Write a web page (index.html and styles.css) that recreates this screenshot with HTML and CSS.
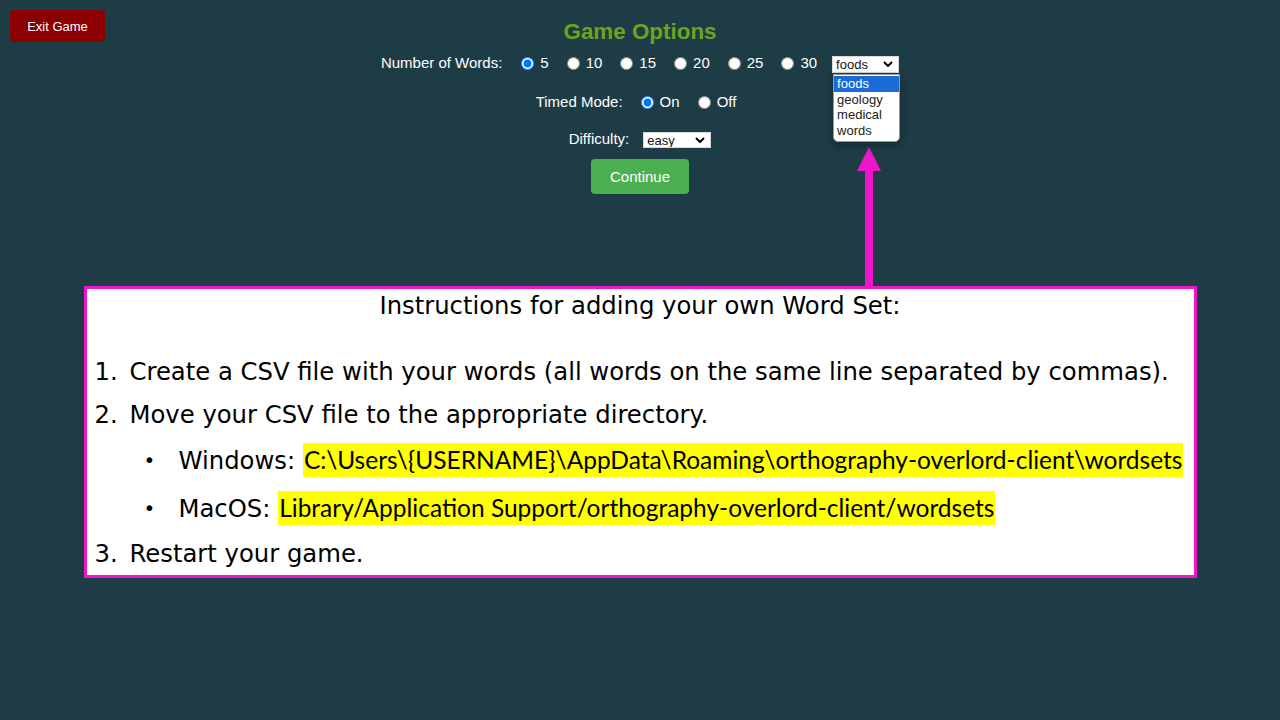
FILE: index.html
```html
<!DOCTYPE html>
<html lang="en">
<head>
<meta charset="utf-8">
<title>Game Options</title>
<link rel="stylesheet" href="styles.css">
</head>
<body>
<div class="page">
  <header class="topbar">
    <div class="topbar-left"><button class="btn-exit" type="button">Exit Game</button></div>
    <h1 class="title">Game Options</h1>
    <div></div>
  </header>

  <section class="options">
    <div class="row">
      <span class="row-label">Number of Words:</span>
      <label class="opt"><input type="radio" name="count" checked>5</label>
      <label class="opt"><input type="radio" name="count">10</label>
      <label class="opt"><input type="radio" name="count">15</label>
      <label class="opt"><input type="radio" name="count">20</label>
      <label class="opt"><input type="radio" name="count">25</label>
      <label class="opt opt-last"><input type="radio" name="count">30</label>
      <span class="select select-words">
        <select><option>foods</option><option>geology</option><option>medical</option><option>words</option></select>
        <svg class="chev" viewBox="0 0 10 6" width="10" height="6"><path d="M1 1 L5 5 L9 1" fill="none" stroke="#000" stroke-width="2"/></svg>
        <span class="popup">
          <span class="popup-item is-selected">foods</span>
          <span class="popup-item">geology</span>
          <span class="popup-item">medical</span>
          <span class="popup-item">words</span>
        </span>
      </span>
    </div>
    <div class="row row-timed">
      <span class="row-label">Timed Mode:</span>
      <label class="opt"><input type="radio" name="timed" checked>On</label>
      <label class="opt opt-end"><input type="radio" name="timed">Off</label>
    </div>
    <div class="row row-diff">
      <span class="row-label label-diff">Difficulty:</span>
      <span class="select select-diff">
        <select><option>easy</option><option>medium</option><option>hard</option></select>
        <svg class="chev" viewBox="0 0 10 6" width="10" height="6"><path d="M1 1 L5 5 L9 1" fill="none" stroke="#000" stroke-width="2"/></svg>
      </span>
    </div>
    <button class="btn-continue" type="button">Continue</button>
  </section>

  <section class="instructions">
    <p class="ins-title">Instructions for adding your own Word Set:</p>
    <ol class="steps">
      <li class="step"><span class="num">1.</span><span>Create a CSV file with your words (all words on the same line separated by commas).</span></li>
      <li class="step"><span class="num">2.</span><span>Move your CSV file to the appropriate directory.</span></li>
      <li class="sub"><span class="bullet">•</span><span>Windows: <mark class="path">C:\Users\{USERNAME}\AppData\Roaming\orthography-overlord-client\wordsets</mark></span></li>
      <li class="sub"><span class="bullet">•</span><span>MacOS: <mark class="path">Library/Application Support/orthography-overlord-client/wordsets</mark></span></li>
      <li class="step"><span class="num">3.</span><span>Restart your game.</span></li>
    </ol>
  </section>

  <svg class="arrow" width="28" height="142" viewBox="0 0 28 142">
    <polygon points="14,2 2,26 26,26" fill="#ef15c8"/>
    <rect x="10" y="25" width="8" height="117" fill="#ef15c8"/>
  </svg>
</div>
</body>
</html>
```

FILE: styles.css
```css
html, body {
  margin: 0;
  padding: 0;
  background: #1e3c45;
}

.page {
  position: relative;
  width: 1280px;
  height: 720px;
  overflow: hidden;
  font-family: "Liberation Sans", Arial, sans-serif;
  color: #ffffff;
}

.topbar {
  display: grid;
  grid-template-columns: 1fr auto 1fr;
  align-items: start;
  padding: 10px 10px 0;
}

.btn-exit {
  width: 95px;
  height: 32px;
  border: none;
  border-radius: 4px;
  background: #8b0000;
  color: #ffffff;
  font-family: "Liberation Sans", Arial, sans-serif;
  font-size: 13px;
  padding: 0;
  cursor: pointer;
}

.title {
  margin: 10px 0 0;
  font-size: 22.4px;
  line-height: 24px;
  font-weight: bold;
  color: #6ba51f;
  text-align: center;
}

.options {
  display: flex;
  flex-direction: column;
  align-items: center;
}

.row {
  display: flex;
  align-items: center;
  height: 18px;
  font-size: 15px;
  line-height: 18px;
  margin-top: 10px;
}

.row-timed { margin-top: 21px; }
.row-diff { margin-top: 19px; }

.row-label { margin-right: 19px; }
.row-timed .row-label { margin-right: 18px; }
.label-diff { margin-right: 14px; }

.opt {
  display: flex;
  align-items: center;
  margin-right: 18px;
}
.opt-last { margin-right: 15px; }
.opt-end { margin-right: 8px; }

.opt input {
  width: 13px;
  height: 13px;
  margin: 0 6px 0 0;
  accent-color: #0075ff;
}

.select {
  position: relative;
  display: inline-block;
}

.select select {
  appearance: none;
  -webkit-appearance: none;
  display: block;
  background: #ffffff;
  border: 1px solid #d8d8d8;
  border-radius: 0;
  color: #111;
  font-family: "Liberation Sans", Arial, sans-serif;
  font-size: 13px;
  line-height: 15px;
  padding: 0 0 0 3px;
  margin: 0;
  outline: none;
}

.select-words { margin-top: 3px; }
.select-words select { width: 67px; height: 17px; }
.select-diff { margin-top: 2px; }
.select-diff select { width: 68px; height: 16px; }

.chev {
  position: absolute;
  right: 6px;
  top: 5px;
  pointer-events: none;
}

.popup {
  position: absolute;
  left: 1px;
  top: 18px;
  width: 65px;
  display: flex;
  flex-direction: column;
  padding: 1px 0 3px;
  background: #ffffff;
  border: 1px solid #9a9a9a;
  border-radius: 0 0 5px 5px;
  box-shadow: 0 3px 8px rgba(0, 0, 0, 0.35);
  z-index: 2;
}

.popup-item {
  display: block;
  height: 15.5px;
  line-height: 15px;
  padding-left: 3px;
  font-size: 13px;
  color: #222;
}

.popup-item.is-selected {
  background: #1a6ad8;
  color: #ffffff;
}

.btn-continue {
  margin-top: 11px;
  width: 98px;
  height: 35px;
  border: none;
  border-radius: 4px;
  background: #4caf50;
  color: #ffffff;
  font-family: "Liberation Sans", Arial, sans-serif;
  font-size: 15px;
  padding: 0;
  cursor: pointer;
}

.instructions {
  box-sizing: border-box;
  width: 1113px;
  margin: 92px auto 0;
  border: 3px solid #ef15c8;
  background: #ffffff;
  color: #000000;
  font-family: "DejaVu Sans", Verdana, sans-serif;
  font-size: 24.3px;
  padding: 0 0 0 8px;
}

.ins-title {
  margin: 0;
  height: 34px;
  line-height: 34px;
  text-align: center;
  padding-right: 8px;
}

.steps {
  list-style: none;
  margin: 27px 0 0;
  padding: 0;
}

.step {
  display: flex;
  height: 43px;
  line-height: 43px;
}

.num { width: 35px; flex: none; }

.sub {
  display: flex;
  align-items: center;
  height: 48px;
  line-height: 48px;
  padding-left: 49px;
}

.bullet {
  width: 35px;
  flex: none;
  font-size: 20px;
  line-height: 48px;
}

.path {
  background: #ffff00;
  color: #000;
  font-family: Lato, "Liberation Sans", sans-serif;
  font-size: 24.5px;
  padding: 2px 1px 3px;
}

.arrow {
  position: absolute;
  left: 855px;
  top: 145px;
}
```
